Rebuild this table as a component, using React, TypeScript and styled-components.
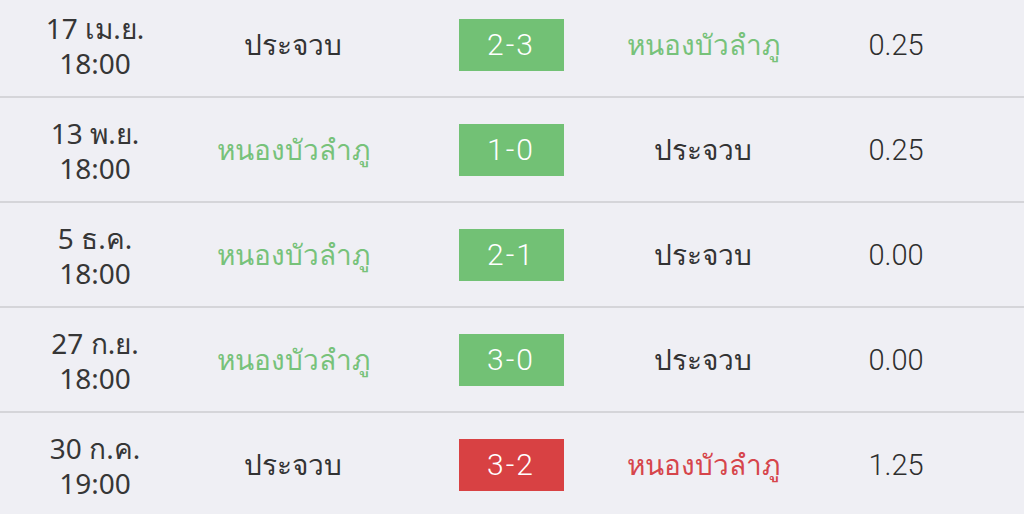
import React from 'react'
import styled, { createGlobalStyle } from 'styled-components'

const GlobalStyle = createGlobalStyle`
  html, body {
    margin: 0;
    padding: 0;
    background: #efeff4;
    overflow: hidden;
  }
  body {
    font-family: "Noto Sans", "Liberation Sans", sans-serif;
    color: #333;
  }
`

type Result = 'win' | 'loss'

type Match = {
  date: string
  time: string
  home: string
  away: string
  score: string
  result: Result
  // which side is highlighted (the team we follow)
  highlight: 'home' | 'away'
  odds: string
}

const NB = 'หนองบัวลำภู'
const PJ = 'ประจวบ'

const matches: Match[] = [
  { date: '17 เม.ย.', time: '18:00', home: PJ, away: NB, score: '2-3', result: 'win', highlight: 'away', odds: '0.25' },
  { date: '13 พ.ย.', time: '18:00', home: NB, away: PJ, score: '1-0', result: 'win', highlight: 'home', odds: '0.25' },
  { date: '5 ธ.ค.', time: '18:00', home: NB, away: PJ, score: '2-1', result: 'win', highlight: 'home', odds: '0.00' },
  { date: '27 ก.ย.', time: '18:00', home: NB, away: PJ, score: '3-0', result: 'win', highlight: 'home', odds: '0.00' },
  { date: '30 ก.ค.', time: '19:00', home: PJ, away: NB, score: '3-2', result: 'loss', highlight: 'away', odds: '1.25' },
]

const colors = {
  win: '#72c175',
  loss: '#d84143',
  winText: '#77c27a',
  lossText: '#d6454b',
}

export default function App() {
  return (
    <>
      <GlobalStyle />
      <List>
        {matches.map((m, i) => (
          <Row key={i}>
            <DateCell>
              <span>{m.date}</span>
              <span>{m.time}</span>
            </DateCell>
            <Team tone={m.highlight === 'home' ? m.result : undefined}>{m.home}</Team>
            <ScoreCell>
              <ScoreBox result={m.result}>{m.score}</ScoreBox>
            </ScoreCell>
            <Team tone={m.highlight === 'away' ? m.result : undefined}>{m.away}</Team>
            <Odds>{m.odds}</Odds>
          </Row>
        ))}
      </List>
    </>
  )
}

const List = styled.div`
  width: 1024px;
  margin-top: -7px;
`

const Row = styled.div`
  display: grid;
  grid-template-columns: 190px 206px 230px 154px 232px;
  align-items: center;
  height: 103px;
  border-bottom: 2px solid #d5d5d9;

  &:last-child {
    border-bottom: none;
  }
`

const DateCell = styled.div`
  display: flex;
  flex-direction: column;
  align-items: center;
  padding-top: 2px;
  font-size: 28px;
  line-height: 35px;
  color: #363636;
`

const Team = styled.div<{ tone?: Result }>`
  text-align: center;
  font-size: 28px;
  color: ${p => (p.tone === 'win' ? colors.winText : p.tone === 'loss' ? colors.lossText : '#333')};
`

const ScoreCell = styled.div`
  display: flex;
  justify-content: center;
`

const ScoreBox = styled.div<{ result: Result }>`
  width: 105px;
  height: 52px;
  display: flex;
  align-items: center;
  justify-content: center;
  background: ${p => (p.result === 'win' ? colors.win : colors.loss)};
  color: #fff;
  font-family: Roboto, "Noto Sans", sans-serif;
  font-weight: 300;
  font-size: 30px;
  letter-spacing: 2px;
`

const Odds = styled.div`
  text-align: center;
  font-family: Roboto, "Noto Sans", sans-serif;
  font-weight: 300;
  font-size: 29px;
  color: #2e2e2e;
`
